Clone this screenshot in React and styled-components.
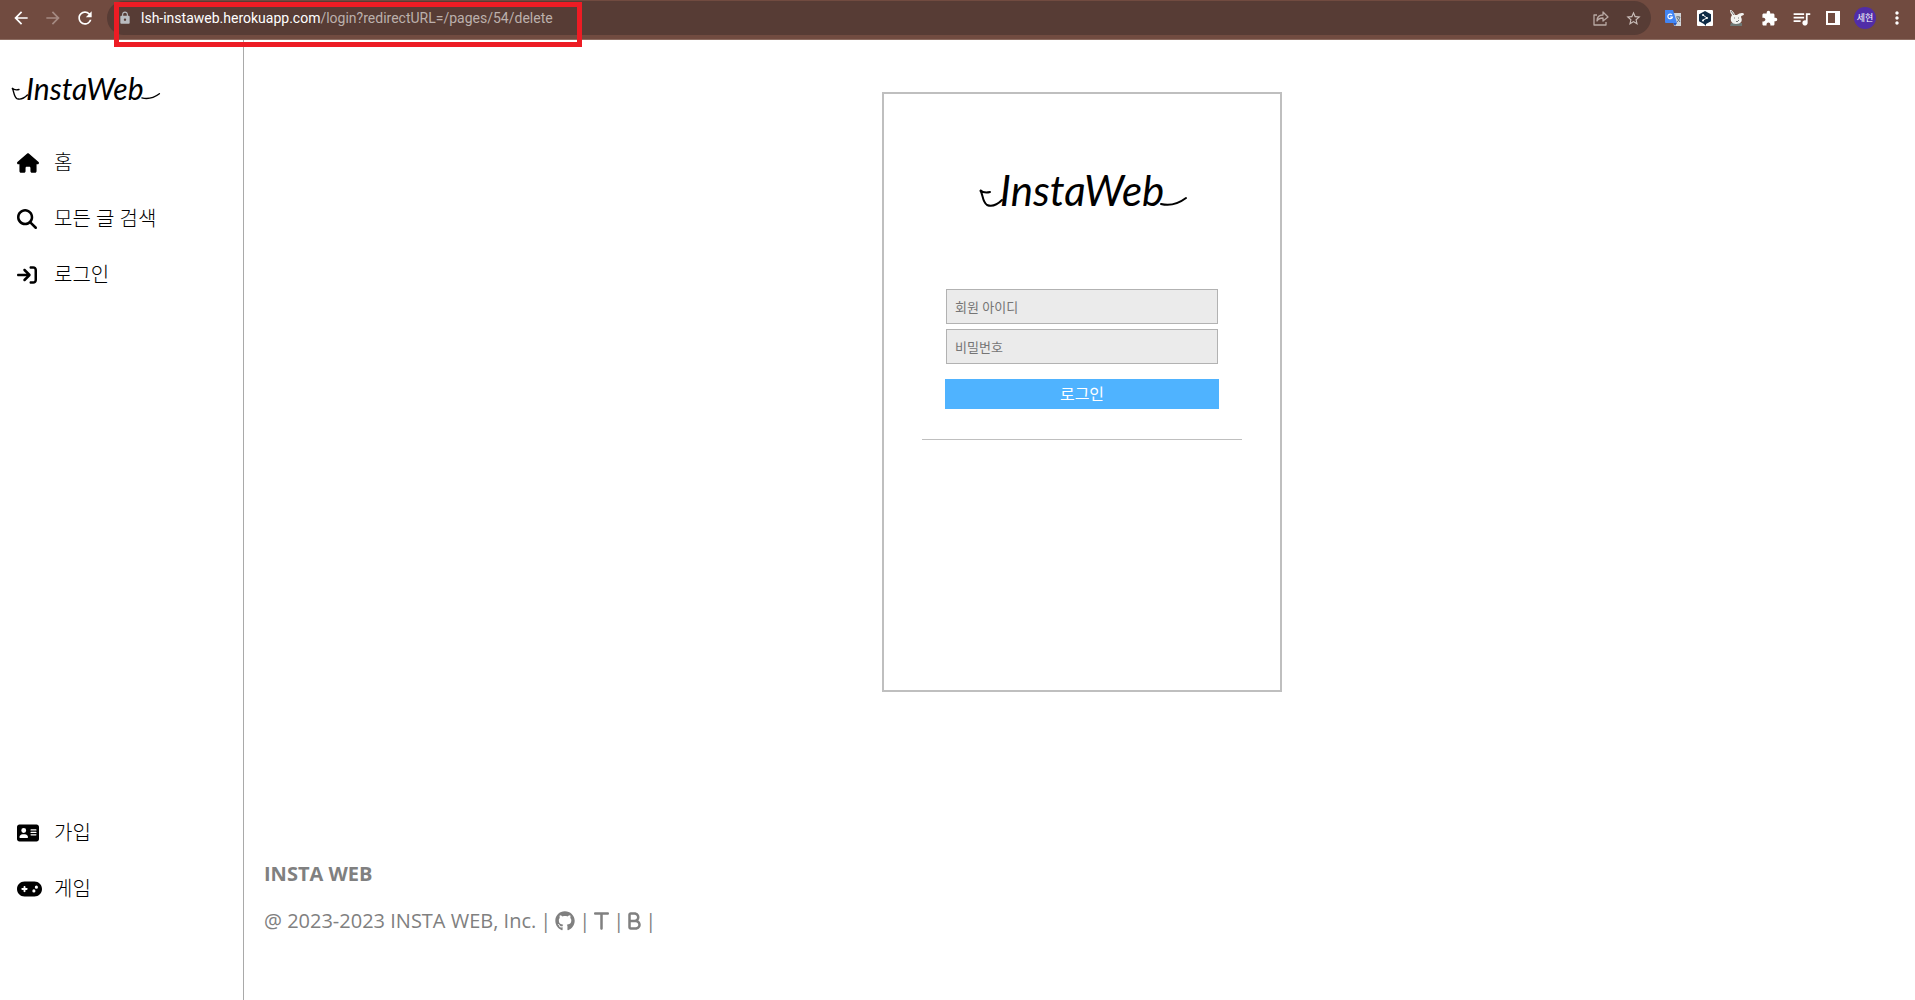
import React from "react";
import styled, { createGlobalStyle } from "styled-components";
import { MdArrowBack, MdArrowForward, MdRefresh, MdLock, MdStarBorder, MdExtension, MdQueueMusic, MdMoreVert } from "react-icons/md";
import { FaHouse, FaMagnifyingGlass, FaArrowRightToBracket, FaAddressCard, FaGamepad, FaGithub, FaT, FaB } from "react-icons/fa6";

const GlobalStyle = createGlobalStyle`
  * { box-sizing: border-box; }
  body { margin: 0; background: #fff; color: #000; font-family: "Open Sans", "Noto Sans CJK KR", sans-serif; }
  button, input { font-family: inherit; }
`;

const Page = styled.div`
  display: flex;
  flex-direction: column;
  min-height: 100vh;
`;

const Toolbar = styled.header`
  display: flex;
  align-items: flex-start;
  justify-content: space-between;
  height: 40px;
  padding: 1px 2px 0 5px;
  background: #714b40;
  border-bottom: 1px solid #8d6d62;
`;

const ToolGroup = styled.div`
  display: flex;
  align-items: center;
  height: 34px;
`;

const ToolButton = styled.button`
  display: flex;
  align-items: center;
  justify-content: center;
  width: 32px;
  height: 32px;
  padding: 0;
  border: 0;
  background: none;
  color: ${(p) => (p.$dim ? "#a58a82" : "#fff")};
`;

const Omnibox = styled.div`
  flex: 1;
  display: flex;
  align-items: center;
  height: 34px;
  margin: 0 6px;
  padding: 0 2px 0 11px;
  border-radius: 17px;
  background: #573c35;
  color: #b9bcc0;
`;

const Address = styled.span`
  flex: 1;
  padding-left: 9px;
  font: 14px/20px Roboto, sans-serif;
  color: #bcb0ac;

  b { font-weight: 400; color: #fff; }
`;

const Avatar = styled.span`
  display: grid;
  place-items: center;
  width: 22px;
  height: 22px;
  border-radius: 50%;
  background: #512da8;
  color: #fff;
  font-size: 9px;
  line-height: 12px;
`;

const Highlight = styled.div`
  position: absolute;
  top: 2px;
  left: 114px;
  width: 468px;
  height: 45px;
  border: 5px solid #ed1c24;
  pointer-events: none;
`;

const Body = styled.div`
  flex: 1;
  display: flex;
`;

const Sidebar = styled.nav`
  display: flex;
  flex-direction: column;
  width: 244px;
  padding-bottom: 83px;
  border-right: 1px solid #a9a9a9;
`;

const Brand = styled.a`
  display: flex;
  align-items: center;
  height: 95px;
  padding-left: 12px;
  color: #000;
  text-decoration: none;
`;

const NavLink = styled.a`
  display: flex;
  align-items: center;
  gap: 15px;
  height: 56px;
  padding-left: 17px;
  color: #000;
  font-size: 20px;
  font-weight: 300;
  line-height: 28px;
  text-decoration: none;
`;

const NavIcon = styled.span`
  display: flex;
  width: 22px;

  svg { flex: none; width: ${(p) => p.$width}px; height: 20px; }
`;

const NavBottom = styled.div`
  margin-top: auto;
`;

const Main = styled.main`
  flex: 1;
  display: flex;
  flex-direction: column;
  padding: 52px 0 0 5px;
`;

const Card = styled.form`
  display: flex;
  flex-direction: column;
  align-items: center;
  align-self: center;
  width: 400px;
  min-height: 600px;
  padding-top: 68px;
  border: 2px solid #bfbfbf;
`;

const CardLogo = styled.div`
  display: flex;
  align-items: center;
  height: 56px;
  margin-bottom: 71px;
`;

const Field = styled.input`
  width: 272px;
  height: 35px;
  margin-bottom: 5px;
  padding: 0 8px;
  border: 1px solid #b2b2b2;
  border-radius: 0;
  background: #ebebeb;
  font-size: 13px;

  &::placeholder { color: #757575; opacity: 1; }
`;

const Submit = styled.button`
  width: 274px;
  height: 30px;
  margin-top: 10px;
  padding: 0;
  border: 0;
  background: #4fb3ff;
  color: #fff;
  font-size: 16px;
  line-height: 24px;
`;

const Rule = styled.hr`
  width: 320px;
  margin: 30px 0 0;
  border: 0;
  border-top: 1px solid #bfbfbf;
`;

const Footer = styled.footer`
  margin-top: 168px;
  padding-left: 15px;
  color: #808080;
  font-size: 20px;
  line-height: 28px;
`;

const FooterTitle = styled.p`
  margin: 0 0 19px;
  font-weight: 700;
`;

const FooterLine = styled.p`
  display: flex;
  align-items: center;
  gap: 4px;
  margin: 0;
`;

const FooterIcon = styled.a`
  display: flex;
  color: inherit;

  svg { width: ${(p) => p.$width}px; height: 20px; }
`;

const Wordmark = styled.span`
  display: inline-flex;
  align-items: flex-end;

  span {
    font-family: "Lato", sans-serif;
    font-style: italic;
    font-weight: 400;
    font-size: ${(p) => p.$size}px;
    line-height: 1;
  }
`;

const Swash = styled.svg`
  width: ${(p) => p.$width}px;
  height: ${(p) => p.$width}px;
  margin-bottom: ${(p) => p.$lift}px;
  overflow: visible;
  fill: none;
  stroke: #000;
  stroke-width: 2;
  stroke-linecap: round;
`;

function Logo({ size, swash, lift }) {
  return (
    <Wordmark $size={size}>
      <Swash $width={swash} $lift={lift} viewBox="0 0 20 20" aria-hidden="true">
        <path d="M10 5 C6 6 2 5 0 3 C3 6 2 15 7 18 C12 20 18 17 22 13" />
      </Swash>
      <span>InstaWeb</span>
      <Swash $width={swash} $lift={lift} viewBox="0 0 20 20" aria-hidden="true">
        <path d="M-3 17 C5 19 14 17 22 11" />
      </Swash>
    </Wordmark>
  );
}

const ShareIcon = () => (
  <svg width="16" height="16" viewBox="0 0 16 16" fill="none" stroke="#b9a9a4" strokeWidth="1.3">
    <path d="M4 5H1v10h12v-3M4 11c0-4 2-6 6-6V2l5 5-5 4V8c-3 0-5 1-6 3Z" strokeLinejoin="round" />
  </svg>
);

const TranslateIcon = () => (
  <svg width="17" height="17" viewBox="0 0 17 17">
    <path d="M7 3h9v13H9z" fill="#d0d4d8" />
    <path d="M0 0h8l4 13H1a1 1 0 0 1-1-1z" fill="#4285f4" />
    <path d="M8 13h4l-2 3z" fill="#2855b8" />
    <path d="M7 5a2.300 2.300 0 1 0 .4 2H5" fill="none" stroke="#fff" strokeWidth="1.200" />
    <path d="M11 7h4M13 6v1m2 0c-1 3-2 4-3 5m0-4 3 4" fill="none" stroke="#63717c" />
  </svg>
);

const HexIcon = () => (
  <svg width="16" height="16" viewBox="0 0 16 16">
    <rect width="16" height="16" rx="1" fill="#fff" />
    <path d="m8 1 6 3.300v7L9 14v2l-2-2-5-2.700v-7z" fill="#0f2b46" />
    <path d="m6 5 4 3-4 2" fill="none" stroke="#fff" />
    <circle cx="6" cy="5" r="1" fill="#fff" /><circle cx="10" cy="8" r="1" fill="#fff" /><circle cx="6" cy="10.500" r="1" fill="#fff" />
  </svg>
);

const RabbitIcon = () => (
  <svg width="16" height="16" viewBox="0 0 16 16">
    <path d="M2 13h11v3H1z" fill="#6e7774" />
    <path d="M1 0c2 0 4 2 5 5h2c2-2 6-3 7-1 0 2-3 1-3 3 2 4 0 7-5 7-4 0-6-3-5-7l1-2C2 4 1 2 1 0z" fill="#f2f2f0" />
    <path d="m2 1 3 4M5 8h1m3 0h1M7 11l1 1 2-2" fill="none" stroke="#777" />
  </svg>
);

const SidePanelIcon = () => (
  <svg width="14" height="14" viewBox="0 0 14 14">
    <path fillRule="evenodd" d="M0 0h14v14H0zM2 2v10h7V2z" fill="#fff" />
  </svg>
);

const topLinks = [
  ["홈", FaHouse, 22],
  ["모든 글 검색", FaMagnifyingGlass, 20],
  ["로그인", FaArrowRightToBracket, 20],
];
const bottomLinks = [
  ["가입", FaAddressCard, 22],
  ["게임", FaGamepad, 25],
];

const renderLink = ([label, Icon, width]) => (
  <NavLink href="#" key={label}>
    <NavIcon $width={width}><Icon /></NavIcon>
    {label}
  </NavLink>
);

const extensions = [
  ["Translate", <TranslateIcon />],
  ["Security", <HexIcon />],
  ["Rabbit", <RabbitIcon />],
  ["Extensions", <MdExtension size={17} />],
  ["Media", <MdQueueMusic size={21} />],
  ["Side panel", <SidePanelIcon />],
  ["Profile", <Avatar>세현</Avatar>],
  ["Menu", <MdMoreVert size={20} />],
];

export default function App() {
  return (
    <Page>
      <GlobalStyle />
      <Toolbar>
        <ToolGroup>
          <ToolButton aria-label="Back"><MdArrowBack size={20} /></ToolButton>
          <ToolButton aria-label="Forward" $dim><MdArrowForward size={20} /></ToolButton>
          <ToolButton aria-label="Reload"><MdRefresh size={20} /></ToolButton>
        </ToolGroup>
        <Omnibox>
          <MdLock size={14} />
          <Address><b>lsh-instaweb.herokuapp.com</b>/login?redirectURL=/pages/54/delete</Address>
          <ToolButton aria-label="Share"><ShareIcon /></ToolButton>
          <ToolButton aria-label="Bookmark" $dim><MdStarBorder size={17} color="#c9bdb9" /></ToolButton>
        </Omnibox>
        <ToolGroup>
          {extensions.map(([label, icon]) => (
            <ToolButton key={label} aria-label={label}>{icon}</ToolButton>
          ))}
        </ToolGroup>
      </Toolbar>
      <Highlight />
      <Body>
        <Sidebar>
          <Brand href="#"><Logo size={30} swash={14} lift={3} /></Brand>
          {topLinks.map(renderLink)}
          <NavBottom>{bottomLinks.map(renderLink)}</NavBottom>
        </Sidebar>
        <Main>
          <Card onSubmit={(e) => e.preventDefault()}>
            <CardLogo><Logo size={42} swash={20} lift={4} /></CardLogo>
            <Field type="text" placeholder="회원 아이디" aria-label="회원 아이디" />
            <Field type="password" placeholder="비밀번호" aria-label="비밀번호" />
            <Submit type="submit">로그인</Submit>
            <Rule />
          </Card>
          <Footer>
            <FooterTitle>INSTA WEB</FooterTitle>
            <FooterLine>
              <span>@ 2023-2023 INSTA WEB, Inc.</span>
              <span>|</span>
              <FooterIcon href="#" aria-label="GitHub" $width={20}><FaGithub /></FooterIcon>
              <span>|</span>
              <FooterIcon href="#" aria-label="Tistory" $width={15}><FaT /></FooterIcon>
              <span>|</span>
              <FooterIcon href="#" aria-label="Blog" $width={13}><FaB /></FooterIcon>
              <span>|</span>
            </FooterLine>
          </Footer>
        </Main>
      </Body>
    </Page>
  );
}
